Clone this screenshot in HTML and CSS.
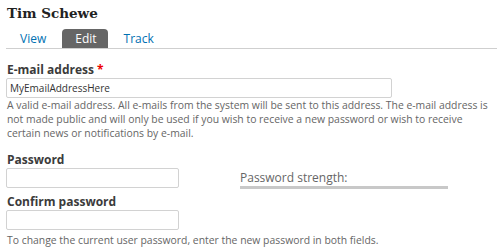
FILE: index.html
```html
<!DOCTYPE html>
<html>
<head>
<meta charset="utf-8">
<link rel="stylesheet" href="styles.css">
</head>
<body>
<h1 class="title">Tim Schewe</h1>
<nav class="tabs">
  <a class="tab">View</a>
  <a class="tab active">Edit</a>
  <a class="tab">Track</a>
</nav>
<form class="form">
  <label class="label label-email">E-mail address <span class="req">*</span></label>
  <input class="input input-wide" type="text" value="MyEmailAddressHere">
  <div class="desc">A valid e-mail address. All e-mails from the system will be sent to this address. The e-mail address is not made public and will only be used if you wish to receive a new password or wish to receive certain news or notifications by e-mail.</div>

  <label class="label label-pass">Password</label>
  <div class="pw-row">
    <input class="input input-short" type="password">
    <div class="strength">
      <div class="strength-title">Password strength:</div>
      <div class="meter"></div>
    </div>
  </div>

  <label class="label label-confirm">Confirm password</label>
  <input class="input input-short" type="password">
  <div class="desc desc-bottom">To change the current user password, enter the new password in both fields.</div>
</form>
</body>
</html>
```

FILE: styles.css
```css
html, body {
  margin: 0;
  padding: 0;
  background: #fff;
}
body {
  padding: 0 3px 0 6px;
  font-family: "Open Sans", "Noto Sans", sans-serif;
  color: #3b3b3b;
}
.title {
  margin: 0;
  padding-top: 5px;
  padding-left: 1px;
  font-family: "DejaVu Serif", serif;
  font-weight: bold;
  font-size: 13.5px;
  line-height: 16px;
  color: #222;
}
.tabs {
  display: flex;
  gap: 3px;
  margin-top: 8px;
  padding-left: 1px;
  border-bottom: 1px solid #cfcfcf;
}
.tab {
  display: block;
  padding: 0 13px 0 13px;
  font-size: 12px;
  line-height: 19px;
  color: #0071b3;
  border-radius: 4px 4px 0 0;
}
.tab.active {
  padding-right: 11px;
  background: #666;
  color: #fff;
}
.form {
  display: flex;
  flex-direction: column;
  align-items: flex-start;
}
.label {
  display: block;
  font-size: 12px;
  line-height: 15px;
  font-weight: bold;
  padding-left: 1px;
  color: #3b3b3b;
}
.label-email { margin-top: 13px; }
.label-pass { margin-top: 12px; }
.label-confirm { margin-top: 5px; }
.req {
  color: #e00;
}
.input {
  box-sizing: border-box;
  height: 20px;
  margin: 1px 0 0 0;
  padding: 0 3px;
  border: 1px solid #d2d2d2;
  border-radius: 2px;
  font-family: "Open Sans", "Noto Sans", sans-serif;
  font-size: 10px;
  color: #333;
  background: #fff;
  outline: none;
}
.input-wide { width: 386px; }
.input-short { width: 173px; }
.desc {
  font-size: 10.4px;
  line-height: 14px;
  color: #666;
  padding-left: 1px;
  margin-right: 4px;
}
.desc-bottom { margin-top: 3px; }
.pw-row {
  display: flex;
  align-items: flex-start;
  gap: 61px;
}
.strength {
  padding-top: 3px;
}
.strength-title {
  font-size: 12px;
  line-height: 15px;
  color: #666;
}
.meter {
  width: 208px;
  height: 3px;
  margin-top: 1px;
  background: #c8c8c8;
}
```
